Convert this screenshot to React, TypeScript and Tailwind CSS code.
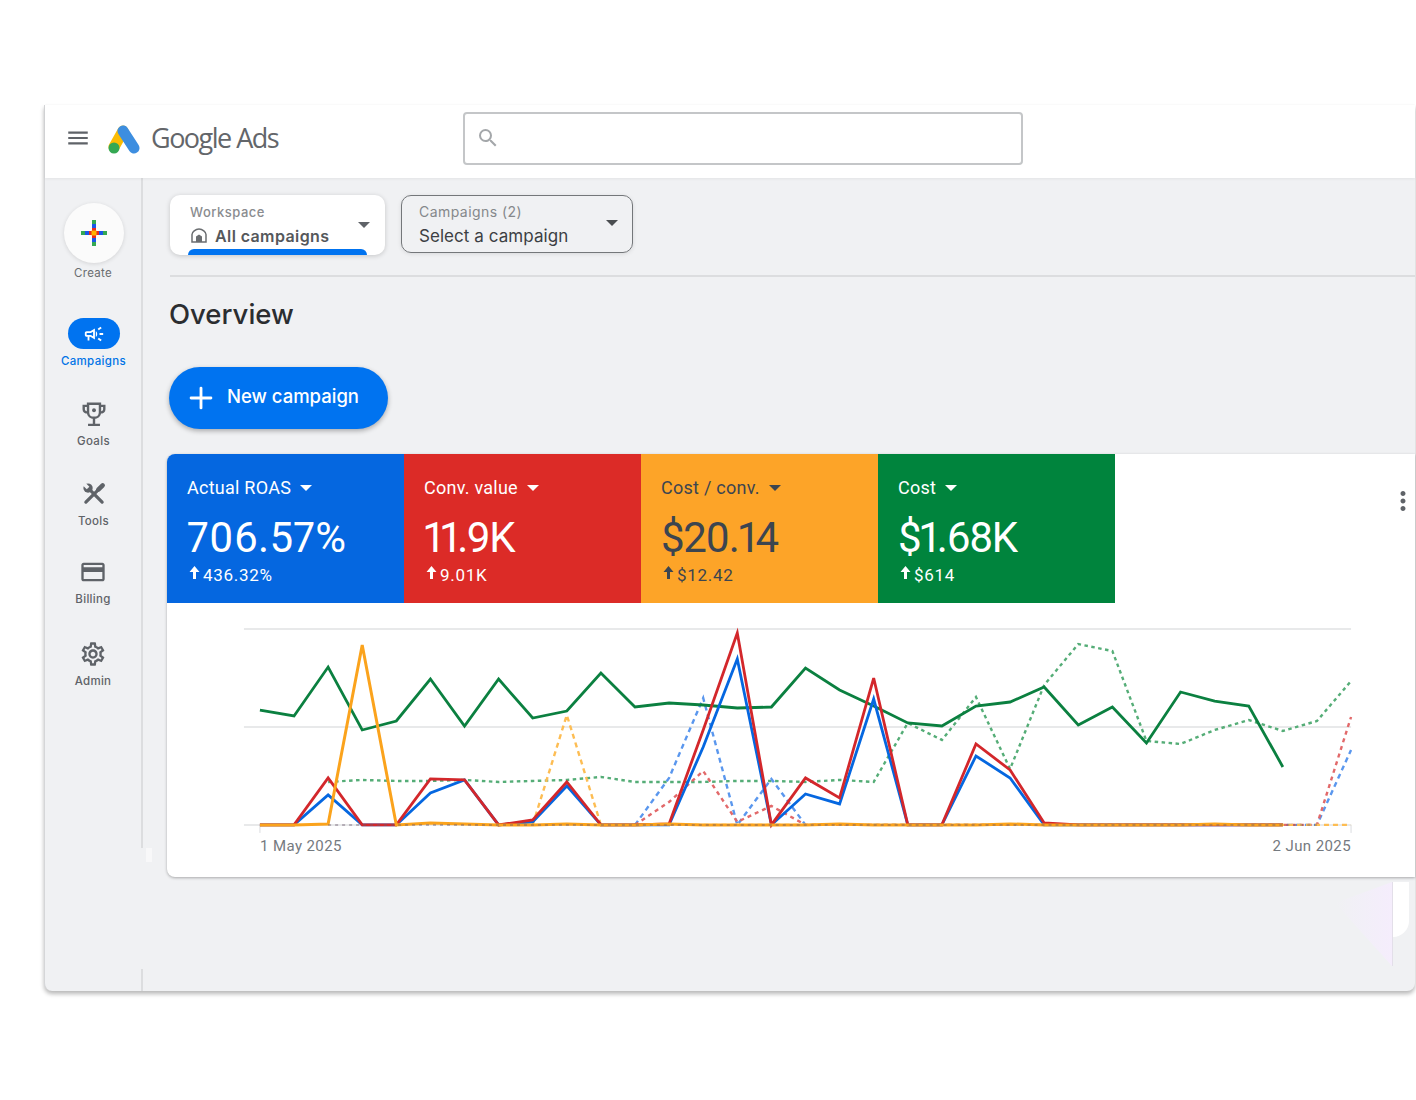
import { Plus } from 'lucide-react';
import { MdMenu, MdMoreVert, MdOutlineCampaign, MdOutlineCreditCard, MdOutlineSettings, MdSearch } from 'react-icons/md';

const X = (i: number) => 260 + i * 34.125;
const flat = (from: number, to: number): [number, number][] => {
    const out: [number, number][] = [];
    for (let i = from; i <= to; i++) out.push([i, 825]);
    return out;
};
const pts = (ys: number[], start = 0) => ys.map((y, i) => `${X(i + start)},${y}`).join(' ');
const ptsPairs = (p: [number, number][]) => p.map(([i, y]) => `${X(i)},${y}`).join(' ');

const greenSolid = [710, 716, 667, 730, 721, 679, 726, 679, 718, 711, 673, 707, 703, 705, 708, 707, 668, 690, 706, 723, 726, 706, 702, 687, 725, 707, 743, 692, 701, 706, 767];
const redSolid = [825, 825, 778, 825, 825, 779, 780, 825, 820, 782, 825, 825, 824, 730, 633, 825, 778, 798, 678, 825, 825, 744, 770, 823, 825, 825, 825, 825, 825, 825, 825];
const blueSolid = [825, 825, 795, 825, 825, 793, 780, 825, 822, 786, 825, 825, 825, 747, 659, 825, 794, 804, 699, 825, 825, 756, 778, 825, 825, 825, 825, 825, 825, 825, 825];
const orangeSolid = [825, 825, 824, 645, 825, 823, 824, 825, 825, 824, 825, 825, 824, 825, 825, 825, 825, 824, 825, 825, 825, 825, 824, 825, 825, 825, 825, 825, 824, 825, 825];
const greenDash = [782, 780, 781, 781, 780, 782, 781, 780, 777, 782, 782, 782, 781, 781, 782, 780, 782, 723, 740, 697, 769, 685, 644, 651, 741, 744, 730, 720, 731, 721, 681];
const blueDash: [number, number][] = [[11, 825], [12, 778], [13, 698], [14, 825], [15, 779], [16, 825], ...flat(17, 31), [32, 750]];
const redDash: [number, number][] = [[11, 825], [12, 802], [13, 771], [14, 822], [15, 806], [16, 825], ...flat(17, 31), [32, 717]];
const orangeDash: [number, number][] = [[8, 825], [9, 715], [10, 825], ...flat(11, 32)];

const scorecards = [
    { title: 'Actual ROAS', value: '706.57%', delta: '436.32%', bg: 'bg-[#0567e0] rounded-tl-lg', text: 'text-white', spacing: 'tracking-[0.3px]' },
    { title: 'Conv. value', value: '11.9K', delta: '9.01K', bg: 'bg-[#dc2b27]', text: 'text-white', spacing: 'tracking-[-1.6px]' },
    { title: 'Cost / conv.', value: '$20.14', delta: '$12.42', bg: 'bg-[#fda428]', text: 'text-[#3c4550]', spacing: 'tracking-[-1.3px]' },
    { title: 'Cost', value: '$1.68K', delta: '$614', bg: 'bg-[#00843d]', text: 'text-white', spacing: 'tracking-[-1.5px]' },
];

function Caret({ className }: { className: string }) {
    return <span className={`inline-block w-0 h-0 border-x-[6px] border-x-transparent border-t-[6px] ${className}`} />;
}

function UpArrow() {
    return (
        <svg className="mt-[-5px] mr-[3px] ml-[2px]" width="11" height="13" viewBox="0 0 11 13" fill="currentColor">
            <path d="M5.500 0 10.500 6H7V13H4V6H.5Z" />
        </svg>
    );
}

function TrophyIcon() {
    return (
        <svg width="26" height="26" viewBox="0 0 24 24" fill="none" stroke="#5f6368" strokeWidth="2.200">
            <path d="M6.500 2.500H17.500V10.500C17.500 13.500 15 15.500 12 15.500S6.500 13.500 6.500 10.500Z" />
            <path d="M6.500 4.500H2.500V7.500C2.500 9.500 4.500 10.500 6.500 10.500M17.500 4.500H21.500V7.500C21.500 9.500 19.500 10.500 17.500 10.500" />
            <path d="M12 15.500V21M6.500 22H17.500" />
            <circle cx="12" cy="8.500" r="1.800" fill="#5f6368" stroke="none" />
        </svg>
    );
}

function ToolsIcon() {
    return (
        <svg width="26" height="26" viewBox="0 0 24 24" fill="none" stroke="#5f6368">
            <path d="M4.500 19.500 14.500 9.500" strokeWidth="3" strokeLinecap="round" />
            <path d="M16 8 20 4" strokeWidth="4.200" strokeLinecap="round" />
            <path d="M8 8 19.500 19.500" strokeWidth="3" strokeLinecap="round" />
            <circle cx="6.500" cy="6.500" r="4.300" fill="#5f6368" stroke="none" />
            <path d="M6.500 6.500 2 2" stroke="#f0f1f3" strokeWidth="3.400" />
        </svg>
    );
}

function CreateIcon() {
    const arm = ['#34a853', '#1a56e8', '#ea2a1e'];
    return (
        <svg width="26" height="26" viewBox="0 0 26 26">
            {arm.map((c, i) => (
                <g key={c} fill={c}>
                    <rect x="11" y={i * 4} width="4" height="4" />
                    <rect x="11" y={22 - i * 4} width="4" height="4" />
                    <rect x={i * 4} y="11" width="4" height="4" />
                    <rect x={22 - i * 4} y="11" width="4" height="4" />
                </g>
            ))}
            <rect x="10.500" y="10.500" width="5" height="5" fill="#ffb300" />
        </svg>
    );
}

function NavItem({ icon, label, className }: { icon: React.ReactNode; label: string; className: string }) {
    return (
        <div className={`flex flex-col items-center ${className}`}>
            <div className="h-[30px] flex items-center justify-center">{icon}</div>
            <span className="mt-[4px] text-[11.5px] leading-[16px] tracking-[0.3px] text-[#5f6368] font-medium">{label}</span>
        </div>
    );
}

function Chart() {
    return (
        <svg className="block w-full h-[232px]" viewBox="167 603 1249 232" fill="none" strokeLinejoin="miter">
            <g stroke="#e8e9ea" strokeWidth="2">
                <path d="M244 629H1352M244 727H1352M244 825H1352" />
            </g>
            <path d="M260 825V833M1352 825V833" stroke="#dadce0" />
            <polyline points={pts(greenDash, 2)} stroke="#55ad77" strokeWidth="2.400" strokeDasharray="3.500 3.500" />
            <polyline points={ptsPairs(blueDash)} stroke="#5a97ee" strokeWidth="2.400" strokeDasharray="5 4" />
            <polyline points={ptsPairs(redDash)} stroke="#e2696a" strokeWidth="2.400" strokeDasharray="4 4" />
            <polyline points={ptsPairs(orangeDash)} stroke="#fdbd53" strokeWidth="2.400" strokeDasharray="5 4" />
            <polyline points={pts(greenSolid)} stroke="#0b8040" strokeWidth="2.800" />
            <polyline points={pts(blueSolid)} stroke="#0567e0" strokeWidth="2.800" />
            <polyline points={pts(redSolid)} stroke="#d3272b" strokeWidth="2.800" />
            <polyline points={pts(orangeSolid)} stroke="#fba31c" strokeWidth="3" />
            <polyline points={ptsPairs(flat(2, 31))} stroke="#6b5a6c" strokeWidth="1.500" strokeDasharray="3 4" opacity="0.55" />
        </svg>
    );
}

export default function App() {
    return (
        <div className="w-[1416px] h-[1100px] bg-white pt-[105px] pl-[44px] overflow-hidden">
            <div className="relative w-[1371px] h-[886px] bg-[#f0f1f3] rounded-bl-lg rounded-br-lg border-l border-[#d5d6d8] shadow-[0_3px_4px_rgba(0,0,0,0.28)] flex flex-col font-['Inter',sans-serif]">
                <header className="h-[73px] shrink-0 bg-white flex items-center pb-[6px] shadow-[0_1px_3px_rgba(0,0,0,0.06)] z-10">
                    <MdMenu className="ml-[20px] mt-[-1px] text-[#5f6368]" size={26} />
                    <svg className="ml-[17px]" width="32" height="30" viewBox="0 0 32 30">
                        <path d="M15 7 6 23" stroke="#fbbc04" strokeWidth="11" strokeLinecap="round" />
                        <path d="M15 7 26 24" stroke="#3d8ee0" strokeWidth="11" strokeLinecap="round" />
                        <circle cx="6" cy="24" r="5.500" fill="#34a853" />
                    </svg>
                    <span className="ml-[11px] text-[27px] tracking-[-1.5px] text-[#63666a] font-['Open_Sans',sans-serif]">Google Ads</span>
                    <div className="ml-[185px] mt-[-1px] w-[560px] h-[53px] bg-white border-2 border-[#c4c6c8] rounded-[4px] flex items-center pl-[11px]">
                        <MdSearch className="text-[#a4a7aa]" size={24} />
                    </div>
                </header>
                <div className="flex-1 flex min-h-0">
                    <aside className="w-[96px] shrink-0 flex flex-col items-center pt-[25px]">
                        <div className="ml-[2px] w-[60px] h-[60px] rounded-full bg-[#fbfbfb] shadow-[0_1px_4px_rgba(0,0,0,0.12)] flex items-center justify-center">
                            <CreateIcon />
                        </div>
                        <span className="mt-[2px] text-[11.5px] leading-[16px] tracking-[0.3px] text-[#6a6d70]">Create</span>
                        <div className="ml-[1px] mt-[37px] w-[52px] h-[31px] rounded-full bg-[#0073f0] flex items-center justify-center">
                            <MdOutlineCampaign className="text-white" size={22} />
                        </div>
                        <span className="ml-[1px] mt-[4px] text-[11.5px] leading-[16px] tracking-[0.35px] text-[#0073e6] font-medium">Campaigns</span>
                        <NavItem className="mt-[30px] ml-[1px]" label="Goals" icon={<TrophyIcon />} />
                        <NavItem className="mt-[30px] ml-[1px]" label="Tools" icon={<ToolsIcon />} />
                        <NavItem className="mt-[28px]" label="Billing" icon={<MdOutlineCreditCard className="text-[#5f6368]" size={28} />} />
                        <NavItem className="mt-[32px]" label="Admin" icon={<MdOutlineSettings className="text-[#5f6368]" size={28} />} />
                    </aside>
                    <div className="w-[2px] shrink-0 flex flex-col justify-between">
                        <div className="h-[670px] bg-[#dcdddf]" />
                        <div className="h-[22px] bg-[#dcdddf]" />
                    </div>
                    <main className="flex-1 min-w-0 pt-[17px] pl-[22px]">
                        <div className="flex items-start pl-[5px] gap-[16px]">
                            <div className="relative w-[215px] h-[60px] bg-white rounded-[10px] shadow-[0_1px_5px_rgba(0,0,0,0.18)] pl-[20px] pt-[9px] overflow-hidden">
                                <div className="text-[13px] leading-[17px] tracking-[0.5px] text-[#8a8c8f] font-medium">Workspace</div>
                                <div className="mt-[4px] flex items-center gap-[7px]">
                                    <svg width="18" height="18" viewBox="0 0 18 18" fill="none">
                                        <path d="M2 15V7.500C2 5 5.500 2 9 2s7 3 7 5.500V15Z" stroke="#6b6e71" strokeWidth="1.500" />
                                        <path d="M6 15V9.500L9 7.500l3 2V15Z" fill="#6b6e71" />
                                    </svg>
                                    <span className="text-[16px] leading-[22px] tracking-[0.4px] text-[#55585b] font-semibold">All campaigns</span>
                                </div>
                                <Caret className="absolute right-[15px] top-[27px] border-t-[#5f6368]" />
                                <div className="absolute left-[18px] bottom-0 w-[179px] h-[6px] bg-[#0073f0] rounded-t-md" />
                            </div>
                            <div className="relative w-[232px] h-[58px] border border-[#74777a] rounded-[10px] shadow-[0_1px_4px_rgba(0,0,0,0.1)] pl-[17px] pt-[6px]">
                                <div className="text-[14px] leading-[19px] tracking-[0.45px] text-[#85888b]">Campaigns (2)</div>
                                <div className="mt-[3px] text-[17px] leading-[24px] tracking-[0.06px] text-[#3c4043]">Select a campaign</div>
                                <Caret className="absolute right-[14px] top-[24px] border-t-[#4a4d50]" />
                            </div>
                        </div>
                        <div className="ml-[5px] mt-[20px] h-[2px] bg-[#dcdddf]" />
                        <h1 className="ml-[4px] mt-[18px] text-[27.5px] leading-[38px] font-medium text-[#2b2d30]">Overview</h1>
                        <button className="ml-[4px] mt-[34px] w-[219px] h-[62px] rounded-full bg-[#0073f0] shadow-[0_2px_5px_rgba(0,0,0,0.3)] flex items-center pl-[15px] gap-[9px] text-white">
                            <Plus size={34} strokeWidth={2} />
                            <span className="text-[18.5px] font-medium mt-[-3px]">New campaign</span>
                        </button>
                        <section className="relative mt-[25px] ml-[2px] h-[423px] bg-white rounded-l-lg shadow-[0_1px_3px_rgba(0,0,0,0.3)] font-['Roboto',sans-serif]">
                            <div className="flex">
                                {scorecards.map((s) => (
                                    <div key={s.title} className={`w-[237px] h-[149px] pl-[20px] pt-[23px] ${s.bg} ${s.text}`}>
                                        <div className="flex items-center gap-[9px] text-[18px] leading-[22px] tracking-[0.25px]">
                                            {s.title}
                                            <Caret className="border-t-current" />
                                        </div>
                                        <div className={`mt-[14px] text-[42px] leading-[50px] proportional-nums ${s.spacing}`}>{s.value}</div>
                                        <div className="flex items-center text-[17px] leading-[24px] tracking-[0.7px]">
                                            <UpArrow />
                                            {s.delta}
                                        </div>
                                    </div>
                                ))}
                                <div className="flex-1 flex justify-end pt-[32px]">
                                    <MdMoreVert className="text-[#5f6368] mr-[-3px]" size={30} />
                                </div>
                            </div>
                            <Chart />
                            <div className="flex justify-between pl-[93px] pr-[64px] text-[15px] leading-[22px] tracking-[0.4px] text-[#757a80]">
                                <span>1 May 2025</span>
                                <span>2 Jun 2025</span>
                            </div>
                        </section>
                    </main>
                </div>
                <div className="absolute left-[101px] top-[743px] w-[6px] h-[14px] bg-[#f8f8f9]" />
                <div className="absolute left-[1290px] top-[777px] w-[57px] h-[84px] bg-gradient-to-r from-[#f0f1f3] via-[#f2eff8] to-[#f5edfc] [clip-path:polygon(100%_0,100%_100%,0_25%)]" />
                <div className="absolute left-[1347px] top-[777px] w-[17px] h-[55px] bg-white border-l border-[#e3dfe9] rounded-br-[16px]" />
                <div className="absolute left-[1347px] top-[832px] w-px h-[29px] bg-[#e3dfe9]" />
            </div>
        </div>
    );
}
